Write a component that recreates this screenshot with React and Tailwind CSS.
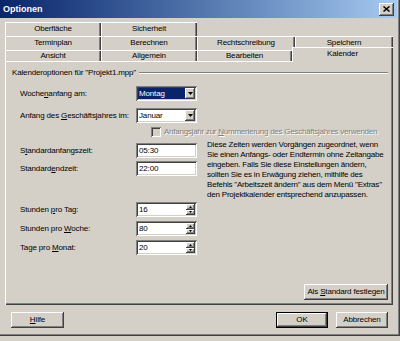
import React from 'react'

const raised = "shadow-[inset_-1px_-1px_#404040,inset_1px_1px_#ffffff,inset_-2px_-2px_#808080,inset_2px_2px_#d4d0c8]"
const sunken = "shadow-[inset_1px_1px_#808080,inset_-1px_-1px_#ffffff,inset_2px_2px_#404040,inset_-2px_-2px_#d4d0c8]"
const tabEdge = "shadow-[inset_1px_1px_#ffffff,inset_-1px_0_#404040,inset_-2px_0_#808080]"

function Tab({label, w, h = "h-[14px]", selected}) {
  if (selected) {
    return (
      <div className={`${w} h-[15px] relative top-[1px] z-10 bg-[#d4d0c8] flex items-center justify-center pb-[1px] ${tabEdge}`}>
        <span>{label}</span>
      </div>
    )
  }
  return (
    <div className={`${w} ${h} flex items-center justify-center ${tabEdge}`}>
      <span>{label}</span>
    </div>
  )
}

function Combo({value, selected}) {
  return (
    <div className={`w-[61px] h-[15px] bg-white ${sunken} flex items-center p-[2px]`}>
      <div className="flex-1 h-full flex items-center">
        <span className={selected ? "bg-[#0a246a] text-white px-[1px] w-full h-full flex items-center" : "px-[1px]"}>{value}</span>
      </div>
      <div className={`w-[10px] h-full bg-[#d4d0c8] ${raised} flex items-center justify-center`}>
        <svg width="5" height="3" viewBox="0 0 5 3"><path d="M0 0h5L2.5 3z" fill="#000" /></svg>
      </div>
    </div>
  )
}

function Field({value}) {
  return (
    <div className={`w-[61px] h-[15px] bg-white ${sunken} flex items-center px-[3px]`}>{value}</div>
  )
}

function Spin({value}) {
  return (
    <div className={`w-[61px] h-[15px] bg-white ${sunken} flex items-center p-[2px]`}>
      <div className="flex-1 pl-[1px]">{value}</div>
      <div className="w-[9px] h-full flex flex-col">
        <div className={`flex-1 bg-[#d4d0c8] ${raised} flex items-center justify-center`}>
          <svg width="3" height="2" viewBox="0 0 3 2"><path d="M0 2h3L1.5 0z" fill="#000" /></svg>
        </div>
        <div className={`flex-1 bg-[#d4d0c8] ${raised} flex items-center justify-center`}>
          <svg width="3" height="2" viewBox="0 0 3 2"><path d="M0 0h3L1.5 2z" fill="#000" /></svg>
        </div>
      </div>
    </div>
  )
}

function Button({children, w, isDefault}) {
  return (
    <div className={`${w} h-[16px] bg-[#d4d0c8] flex items-center justify-center ${isDefault ? "border border-black shadow-[inset_-1px_-1px_#404040,inset_1px_1px_#ffffff,inset_-2px_-2px_#808080]" : raised}`}>
      <span>{children}</span>
    </div>
  )
}

export default function App() {
  return (
    <div className="w-[400px] h-[341px] bg-[#d4d0c8] font-['Liberation_Sans',Arial,sans-serif] text-[8px] leading-none tracking-[-0.15px] text-black">
      <div className="w-[400px] h-[336px] flex flex-col shadow-[inset_-1px_-1px_#404040,inset_-2px_-2px_#808080]">

        {/* Title bar */}
        <div className="w-[397px] h-[18px] bg-linear-to-r from-[#0a246a] to-[#a6caf0] flex items-center justify-between pl-[3px] pr-[3px]">
          <span className="text-white font-bold text-[9px] tracking-normal">Optionen</span>
          <div className={`w-[15px] h-[13px] bg-[#d4d0c8] ${raised} flex items-center justify-center`}>
            <svg width="7" height="6" viewBox="0 0 7 6">
              <path d="M0.5 0.5l6 5M6.5 0.5l-6 5" stroke="#000" strokeWidth="1.5" />
            </svg>
          </div>
        </div>

        {/* Tabs */}
        <div className="mt-[4px] ml-[5px] w-[388px]">
          <div className="flex h-[14px]">
            <Tab label="Oberfläche" w="w-[96px]" />
            <Tab label="Sicherheit" w="w-[96px]" />
          </div>
          <div className="flex h-[14px]">
            <Tab label="Terminplan" w="w-[96px]" />
            <Tab label="Berechnen" w="w-[96px]" />
            <Tab label="Rechtschreibung" w="w-[98px]" />
            <Tab label="Speichern" w="w-[98px]" />
          </div>
          <div className="flex items-end h-[11px]">
            <Tab label="Ansicht" w="w-[96px]" h="h-[11px]" />
            <Tab label="Allgemein" w="w-[96px]" h="h-[11px]" />
            <Tab label="Bearbeiten" w="w-[95px]" h="h-[11px]" />
            <Tab label="Kalender" w="w-[101px]" selected />
          </div>
        </div>

        {/* Panel */}
        <div className="ml-[5px] w-[388px] h-[244px] flex flex-col pt-[7px] shadow-[inset_1px_1px_#ffffff,inset_-1px_-1px_#404040,inset_-2px_-2px_#808080]">
          <div className="flex items-center h-[10px] pl-[7px] pr-[5px]">
            <span>Kalenderoptionen für "Projekt1.mpp"</span>
            <div className="flex-1 ml-[3px] border-t border-[#808080] border-b border-b-white" />
          </div>

          <div className="flex items-center h-[15px] mt-[8px] pl-[15px]">
            <span className="w-[116px]">Woche<u>n</u>anfang am:</span>
            <Combo value="Montag" selected />
          </div>
          <div className="flex items-center h-[15px] mt-[7px] pl-[15px]">
            <span className="w-[116px]">Anfang des <u>G</u>eschäftsjahres im:</span>
            <Combo value="Januar" />
          </div>
          <div className="flex items-center h-[11px] mt-[3px] pl-[146px]">
            <div className="w-[10px] h-[10px] bg-[#d4d0c8] shadow-[inset_1px_1px_#808080,inset_-1px_-1px_#ffffff,inset_2px_2px_#404040,inset_-2px_-2px_#d4d0c8]" />
            <span className="ml-[3px] whitespace-nowrap tracking-[-0.25px] text-[#808080] [text-shadow:1px_1px_0_#ffffff]">Anfangsjahr zur <u>N</u>ummerierung des Geschäftsjahres verwenden</span>
          </div>

          <div className="flex mt-[2px] pl-[15px]">
            <div className="flex flex-col">
              <div className="flex items-center h-[15px] mt-[4px]">
                <span className="w-[116px]">S<u>t</u>andardanfangszeit:</span>
                <Field value="05:30" />
              </div>
              <div className="flex items-center h-[15px] mt-[3px]">
                <span className="w-[116px]">Standard<u>e</u>ndzeit:</span>
                <Field value="22:00" />
              </div>
            </div>
            <p className="ml-[10px] mt-[1px] whitespace-nowrap leading-[10px] tracking-[-0.2px]">
              Diese Zeiten werden Vorgängen zugeordnet, wenn<br />
              Sie einen Anfangs- oder Endtermin ohne Zeitangabe<br />
              eingeben. Falls Sie diese Einstellungen ändern,<br />
              sollten Sie es in Erwägung ziehen, mithilfe des<br />
              Befehls "Arbeitszeit ändern" aus dem Menü "Extras"<br />
              den Projektkalender entsprechend anzupassen.
            </p>
          </div>

          <div className="flex items-center h-[15px] mt-[2px] pl-[15px]">
            <span className="w-[116px]">Stunden <u>p</u>ro Tag:</span>
            <Spin value="16" />
          </div>
          <div className="flex items-center h-[15px] mt-[4px] pl-[15px]">
            <span className="w-[116px]">Stunden pro <u>W</u>oche:</span>
            <Spin value="80" />
          </div>
          <div className="flex items-center h-[15px] mt-[4px] pl-[15px]">
            <span className="w-[116px]">Tage pro <u>M</u>onat:</span>
            <Spin value="20" />
          </div>

          <div className="flex justify-end mt-auto mb-[5px] pr-[5px]">
            <Button w="w-[84px]">Als <u>S</u>tandard festlegen</Button>
          </div>
        </div>

        {/* Bottom buttons */}
        <div className="flex items-center mt-[7px] pl-[11px]">
          <Button w="w-[53px]"><u>H</u>ilfe</Button>
          <div className="flex-1" />
          <div className="flex gap-[8px] pr-[12px]">
            <Button w="w-[52px]" isDefault>OK</Button>
            <Button w="w-[52px]">Abbrechen</Button>
          </div>
        </div>
      </div>
    </div>
  )
}
